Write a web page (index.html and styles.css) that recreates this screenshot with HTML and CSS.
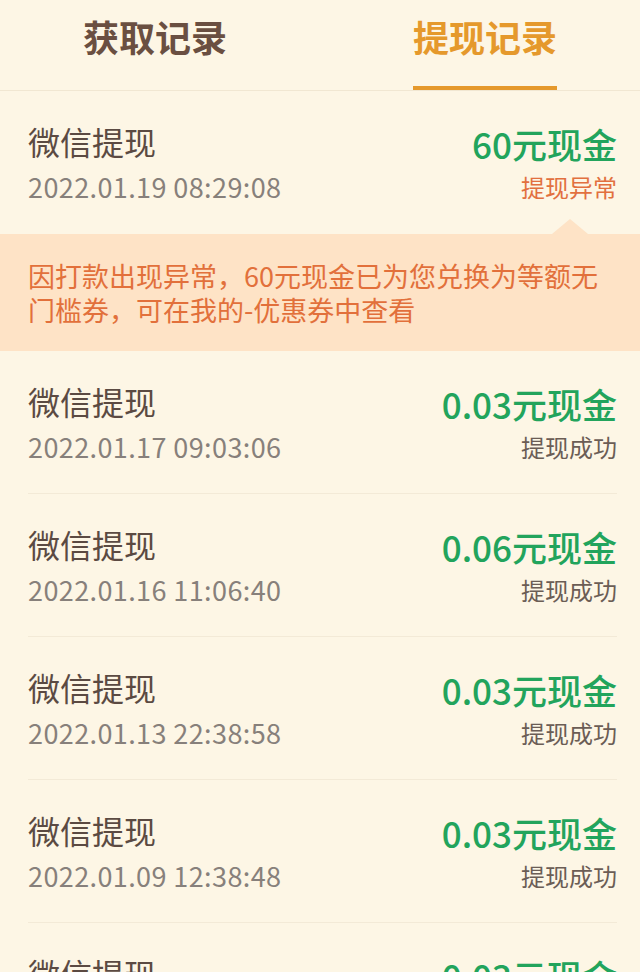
FILE: index.html
```html
<!doctype html>
<html lang="zh-CN">
<head>
<meta charset="utf-8">
<meta name="viewport" content="width=device-width, initial-scale=1">
<title>提现记录</title>
<link rel="stylesheet" href="styles.css">
</head>
<body>

	<nav class="tabs">
		<div class="tab"><span>获取记录</span></div>
		<div class="tab active"><span>提现记录</span></div>
	</nav>

	<main class="records">

		<div class="record">
			<div class="info">
				<div class="name">微信提现</div>
				<div class="time">2022.01.19 08:29:08</div>
			</div>
			<div class="result">
				<div class="amount">60元现金</div>
				<div class="status error">提现异常</div>
			</div>
		</div>

		<div class="notice">因打款出现异常，60元现金已为您兑换为等额无门槛券，可在我的-优惠券中查看</div>

		<div class="record">
			<div class="info">
				<div class="name">微信提现</div>
				<div class="time">2022.01.17 09:03:06</div>
			</div>
			<div class="result">
				<div class="amount">0.03元现金</div>
				<div class="status">提现成功</div>
			</div>
		</div>

		<div class="record">
			<div class="info">
				<div class="name">微信提现</div>
				<div class="time">2022.01.16 11:06:40</div>
			</div>
			<div class="result">
				<div class="amount">0.06元现金</div>
				<div class="status">提现成功</div>
			</div>
		</div>

		<div class="record">
			<div class="info">
				<div class="name">微信提现</div>
				<div class="time">2022.01.13 22:38:58</div>
			</div>
			<div class="result">
				<div class="amount">0.03元现金</div>
				<div class="status">提现成功</div>
			</div>
		</div>

		<div class="record">
			<div class="info">
				<div class="name">微信提现</div>
				<div class="time">2022.01.09 12:38:48</div>
			</div>
			<div class="result">
				<div class="amount">0.03元现金</div>
				<div class="status">提现成功</div>
			</div>
		</div>

		<div class="record">
			<div class="info">
				<div class="name">微信提现</div>
				<div class="time">2022.01.08 10:12:30</div>
			</div>
			<div class="result">
				<div class="amount">0.03元现金</div>
				<div class="status">提现成功</div>
			</div>
		</div>

	</main>

</body>
</html>
```

FILE: styles.css
```css
* { box-sizing: border-box; }

html, body { height: 100%; }

body { background: #fdf6e5; color: #5b4a42; font-family: "Noto Sans CJK SC", "Noto Sans", sans-serif; margin: 0; overflow: hidden; }

.tabs { border-bottom: 1px solid #f1e7d2; display: flex; gap: 186px; padding: 16px 0 0 83px; }

.tab span { border-bottom: 4px solid transparent; color: #6a4f41; display: block; font-size: 36px; font-weight: 700; line-height: 40px; padding-bottom: 30px; }
.tab.active span { border-bottom-color: #e5992c; color: #e5992c; }

.record { border-bottom: 1px solid #f3ead7; display: flex; height: 143px; justify-content: space-between; margin: 0 23px 0 28px; padding-top: 30px; }
.record:first-child { border-bottom: none; }

.name { font-size: 32px; line-height: 40px; }
.time { color: #87807b; font-size: 27px; letter-spacing: 0.4px; line-height: 36px; margin-top: 8px; }

.result { text-align: right; }
.amount { color: #22a45c; font-size: 35px; font-weight: 500; line-height: 46px; }
.status { color: #6b5d55; font-size: 24px; line-height: 36px; margin-top: 2px; }
.status.error { color: #e2703f; }

.notice { background: #fee3c6; color: #e2703b; font-size: 27px; line-height: 34px; padding: 25px 28px 24px; position: relative; }
.notice::before { border-bottom: 15px solid #fee3c6; border-left: 18px solid transparent; border-right: 18px solid transparent; content: ""; left: 552px; position: absolute; top: -15px; }
```
